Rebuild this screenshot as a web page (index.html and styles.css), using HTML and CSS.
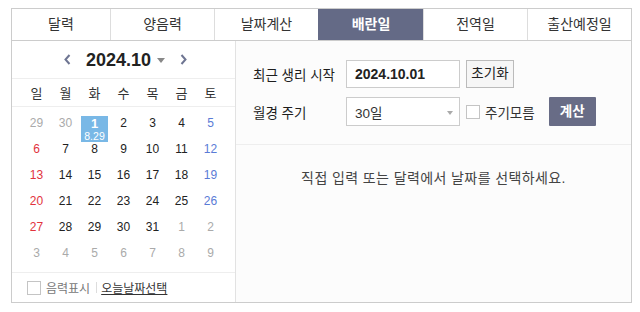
FILE: index.html
```html
<!DOCTYPE html>
<html>
<head>
  <meta charset="utf-8">
  <title>배란일 계산기</title>
  <link rel="stylesheet" href="styles.css">
</head>
<body>
  <div class="calc">
    <ul class="tabs">
      <li class="t1">달력</li>
      <li>양음력</li>
      <li>날짜계산</li>
      <li class="on t4">배란일</li>
      <li>전역일</li>
      <li>출산예정일</li>
    </ul>

    <div class="calc-body">
      <!-- calendar -->
      <div class="cal">
        <div class="cal-head">
          <svg class="nav" width="7" height="11" viewBox="0 0 7 11"><path d="M5.5 1 L1.5 5.5 L5.5 10" fill="none" stroke="#6e7592" stroke-width="2"/></svg>
          <strong class="ym">2024.10</strong>
          <span class="caret"></span>
          <svg class="nav" width="7" height="11" viewBox="0 0 7 11"><path d="M1.5 1 L5.5 5.5 L1.5 10" fill="none" stroke="#6e7592" stroke-width="2"/></svg>
        </div>
        <div class="week">
          <span>일</span><span>월</span><span>화</span><span>수</span><span>목</span><span>금</span><span>토</span>
        </div>
        <div class="days">
          <span class="off">29</span><span class="off">30</span><span class="sel">1<em>8.29</em></span><span>2</span><span>3</span><span>4</span><span class="sat">5</span>
          <span class="sun">6</span><span>7</span><span>8</span><span>9</span><span>10</span><span>11</span><span class="sat">12</span>
          <span class="sun">13</span><span>14</span><span>15</span><span>16</span><span>17</span><span>18</span><span class="sat">19</span>
          <span class="sun">20</span><span>21</span><span>22</span><span>23</span><span>24</span><span>25</span><span class="sat">26</span>
          <span class="sun">27</span><span>28</span><span>29</span><span>30</span><span>31</span><span class="off">1</span><span class="off">2</span>
          <span class="off">3</span><span class="off">4</span><span class="off">5</span><span class="off">6</span><span class="off">7</span><span class="off">8</span><span class="off">9</span>
        </div>
        <div class="cal-foot">
          <span class="box"></span>
          <span class="lunar">음력표시</span>
          <span class="bar"></span>
          <a class="today">오늘날짜선택</a>
        </div>
      </div>

      <!-- form -->
      <div class="panel">
        <div class="form">
          <div class="row">
            <span class="lbl">최근 생리 시작</span>
            <span class="field date">2024.10.01</span>
            <span class="btn-reset">초기화</span>
          </div>
          <div class="row">
            <span class="lbl">월경 주기</span>
            <span class="field select">30일<i class="arrow"></i></span>
            <span class="box"></span>
            <span class="chk-text">주기모름</span>
            <span class="btn-calc">계산</span>
          </div>
        </div>
        <p class="msg">직접 입력 또는 달력에서 날짜를 선택하세요.</p>
      </div>
    </div>
  </div>
</body>
</html>
```

FILE: styles.css
```css
/* calculator widget */
body {
  margin: 0;
  font-family: "Liberation Sans", "Noto Sans CJK KR", sans-serif;
  color: #222;
  background: #fff;
}
.calc {
  margin: 8px 0 0 11px;
  width: 619px;
  border: 1px solid #ccc;
}

/* tabs */
.tabs {
  display: flex;
  margin: 0;
  padding: 0;
  list-style: none;
  border-bottom: 1px solid #ccc;
}
.tabs li {
  width: 103px;
  height: 31px;
  line-height: 31px;
  text-align: center;
  font-size: 14px;
  color: #333;
  border-left: 1px solid #ddd;
}
.tabs li.t1 {
  width: 98px;
  border-left: none;
}
.tabs li.t4 {
  width: 104px;
}
.tabs li.on {
  background-color: #646a86;
  border-left-color: #646a86;
  color: #fff;
  font-weight: bold;
}

.calc-body {
  display: flex;
  height: 261px;
}

/* calendar */
.cal {
  width: 223px;
  border-right: 1px solid #e2e2e2;
  background: #fff;
}
.cal-head {
  height: 37px;
  border-bottom: 1px solid #eee;
  display: flex;
  align-items: center;
  justify-content: center;
  padding-left: 4px;
}
.ym {
  font-size: 18px;
  line-height: 20px;
  color: #222;
  margin: 0 6px 0 15px;
}
.caret {
  width: 0;
  height: 0;
  border-left: 4.5px solid transparent;
  border-right: 4.5px solid transparent;
  border-top: 5px solid #888;
  margin: 2px 15px 0 0;
}
.week {
  height: 27px;
  border-bottom: 1px solid #eee;
  display: grid;
  grid-template-columns: repeat(7, 29px);
  justify-content: center;
  align-items: center;
  font-size: 13px;
  color: #333;
}
.week span {
  text-align: center;
}
.days {
  height: 156px;
  padding: 9px 0 0;
  border-bottom: 1px solid #eee;
  display: grid;
  grid-template-columns: repeat(7, 29px);
  grid-auto-rows: 26px;
  justify-content: center;
}
.days span {
  margin: 0 1px;
  text-align: center;
  font-size: 12px;
  line-height: 15px;
  color: #222;
}
.days .sun { color: #e2333d; }
.days .sat { color: #5a7bd6; }
.days .off { color: #aaa; }
.days .sel {
  background-color: #79b8e6;
  color: #fff;
  font-weight: bold;
  font-size: 13px;
}
.days .sel em {
  display: block;
  font-style: normal;
  font-weight: normal;
  font-size: 10.5px;
  line-height: 11px;
}
.cal-foot {
  height: 29px;
  display: flex;
  align-items: center;
  padding-left: 15px;
  font-size: 12px;
}
.box {
  width: 12px;
  height: 12px;
  border: 1px solid #c4c4c4;
  background: #fff;
}
.lunar {
  color: #777;
  margin-left: 5px;
}
.bar {
  width: 1px;
  height: 11px;
  background: #ddd;
  margin: 0 4px 0 6px;
}
.today {
  color: #333;
  text-decoration: underline;
}

/* form panel */
.panel {
  flex: 1;
  background: #fcfcfc;
}
.form {
  height: 84px;
  padding: 19px 0 0 17px;
  border-bottom: 1px solid #eee;
}
.row {
  display: flex;
  align-items: center;
  height: 28px;
  margin-bottom: 9px;
  font-size: 13.5px;
}
.row + .row {
  height: 29px;
}
.lbl {
  width: 93px;
  color: #1e1e1e;
}
.field {
  box-sizing: border-box;
  width: 114px;
  height: 100%;
  border: 1px solid #ccc;
  background: #fff;
  display: flex;
  align-items: center;
  padding-left: 8px;
}
.date {
  font-weight: bold;
  font-size: 14px;
  color: #222;
}
.select {
  color: #333;
  position: relative;
}
.arrow {
  position: absolute;
  right: 6px;
  top: 13px;
  width: 0;
  height: 0;
  border-left: 3.5px solid transparent;
  border-right: 3.5px solid transparent;
  border-top: 4px solid #aaa;
}
.btn-reset {
  box-sizing: border-box;
  margin-left: 6px;
  width: 48px;
  height: 28px;
  line-height: 26px;
  text-align: center;
  border: 1px solid #bbb;
  background: #f6f6f6;
  color: #222;
}
.row .box {
  margin-left: 6px;
}
.chk-text {
  margin-left: 5px;
  color: #333;
}
.btn-calc {
  margin-left: 14px;
  width: 47px;
  height: 29px;
  line-height: 29px;
  text-align: center;
  background-color: #686c86;
  color: #fff;
  font-weight: bold;
  border-radius: 1px;
}
.msg {
  margin: 0;
  padding-top: 23px;
  text-align: center;
  font-size: 14px;
  letter-spacing: 0.4px;
  line-height: 20px;
  color: #444;
}
```
